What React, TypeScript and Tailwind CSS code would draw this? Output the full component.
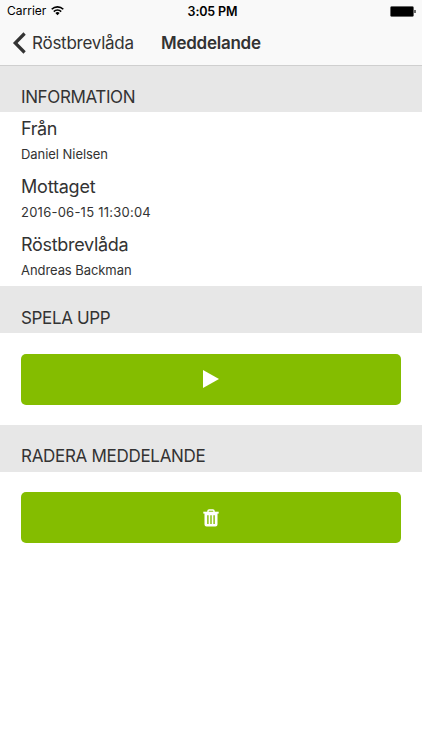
import type { ReactNode } from 'react';

interface InfoItem {
  label: string;
  value: string;
  labelClass: string;
  valueClass: string;
}

const infoItems: InfoItem[] = [
  { label: 'Från', value: 'Daniel Nielsen', labelClass: 'tracking-[-0.4px]', valueClass: 'tracking-[-0.05px]' },
  { label: 'Mottaget', value: '2016-06-15 11:30:04', labelClass: 'tracking-[-0.2px]', valueClass: 'tracking-[0.24px]' },
  { label: 'Röstbrevlåda', value: 'Andreas Backman', labelClass: 'tracking-[-0.3px]', valueClass: 'tracking-[-0.07px]' },
];

function StatusBar() {
  return (
    <div className="grid h-[22px] grid-cols-3 items-center pr-1.5 pl-[7px] text-black">
      <div className="flex items-center gap-[5px]">
        <span className="text-[12px] leading-none">Carrier</span>
        <svg className="h-[10px] w-[13px]" viewBox="0 0 13 10" fill="none" stroke="currentColor" strokeWidth="1.6">
          <path d="M0.7 3.3a8.2 8.2 0 0 1 11.6 0" />
          <path d="M2.8 5.6a5.2 5.2 0 0 1 7.4 0" />
          <path d="M6.5 9.3L4.4 7.1a2.9 2.9 0 0 1 4.2 0z" fill="currentColor" stroke="none" />
        </svg>
      </div>
      <span className="pt-0.5 pl-0.5 text-center text-[12.5px] leading-none font-semibold tracking-[-0.15px]">3:05 PM</span>
      <svg className="h-[11px] w-[26px] justify-self-end" viewBox="0 0 26 11">
        <rect x="0.5" y="0.5" width="23" height="10" rx="1.2" fill="black" stroke="#555" strokeWidth="0.6" />
        <rect x="24.3" y="4" width="1.4" height="3" fill="#333" />
      </svg>
    </div>
  );
}

interface SectionProps {
  title: string;
  titleClass: string;
  children: ReactNode;
}

function Section({ title, titleClass, children }: SectionProps) {
  return (
    <section>
      <h2 className={`bg-[#e7e7e7] pl-[21px] text-[17px] leading-[26px] ${titleClass}`}>{title}</h2>
      {children}
    </section>
  );
}

function ActionButton({ label, children }: { label: string; children: ReactNode }) {
  return (
    <div className="h-[92px] px-[21px] pt-[20.5px]">
      <button
        type="button"
        aria-label={label}
        className="flex h-[51px] w-full items-center justify-center rounded-[5px] bg-[#84bd00] text-white"
      >
        {children}
      </button>
    </div>
  );
}

export default function App() {
  return (
    <div className="min-h-[750px] w-full overflow-hidden bg-white font-['Inter','Liberation_Sans',sans-serif] text-[#333]">
      <header className="h-[66px] border-b border-[#cfcfcf] bg-[#f9f9f9]">
        <StatusBar />
        <div className="flex h-[42px] items-center pl-3">
          <svg className="h-[22px] w-[14px]" viewBox="0 0 14 22" fill="none" stroke="currentColor" strokeWidth="3.2">
            <path d="M12.6 1.5L3.2 11l9.4 9.5" />
          </svg>
          <span className="ml-1.5 w-[129px] text-[17px] leading-6 tracking-[-0.25px]">Röstbrevlåda</span>
          <h1 className="text-[17px] leading-6 font-semibold tracking-[-0.25px]">Meddelande</h1>
        </div>
      </header>

      <Section title="INFORMATION" titleClass="h-[46px] pt-[18px] tracking-[-0.38px]">
        <dl className="h-[174.25px] pl-[21px]">
          {infoItems.map((item) => (
            <div key={item.label} className="h-[58px] pt-1">
              <dt className={`text-[18px] leading-[26px] ${item.labelClass}`}>{item.label}</dt>
              <dd className={`pt-[2.5px] text-[13px] leading-[18px] ${item.valueClass}`}>{item.value}</dd>
            </div>
          ))}
        </dl>
      </Section>

      <Section title="SPELA UPP" titleClass="h-[47px] pt-[18.75px] tracking-[-0.35px]">
        <ActionButton label="Spela upp">
          <svg className="h-[18px] w-[16px]" viewBox="0 0 16 18" fill="currentColor">
            <path d="M0 0l16 9-16 9z" />
          </svg>
        </ActionButton>
      </Section>

      <Section title="RADERA MEDDELANDE" titleClass="h-[46.5px] pt-[18px] tracking-[-0.3px]">
        <ActionButton label="Radera meddelande">
          <svg className="h-[18px] w-[16px]" viewBox="0 0 16 18" fill="currentColor">
            <path d="M0.3 2.7h15.4v1.9H0.3z" />
            <path d="M5 3.2V2q0-1.1 1.1-1.1h3.8Q11 0.9 11 2v1.2" fill="none" stroke="currentColor" strokeWidth="1.5" />
            <path
              fillRule="evenodd"
              d="M1.5 4h13v11.6q0 2-2 2h-9q-2 0-2-2zM4.2 6.3v8.6h1.4V6.3zM7.3 6.3v8.6h1.4V6.3zM10.4 6.3v8.6h1.4V6.3z"
            />
          </svg>
        </ActionButton>
      </Section>
    </div>
  );
}
